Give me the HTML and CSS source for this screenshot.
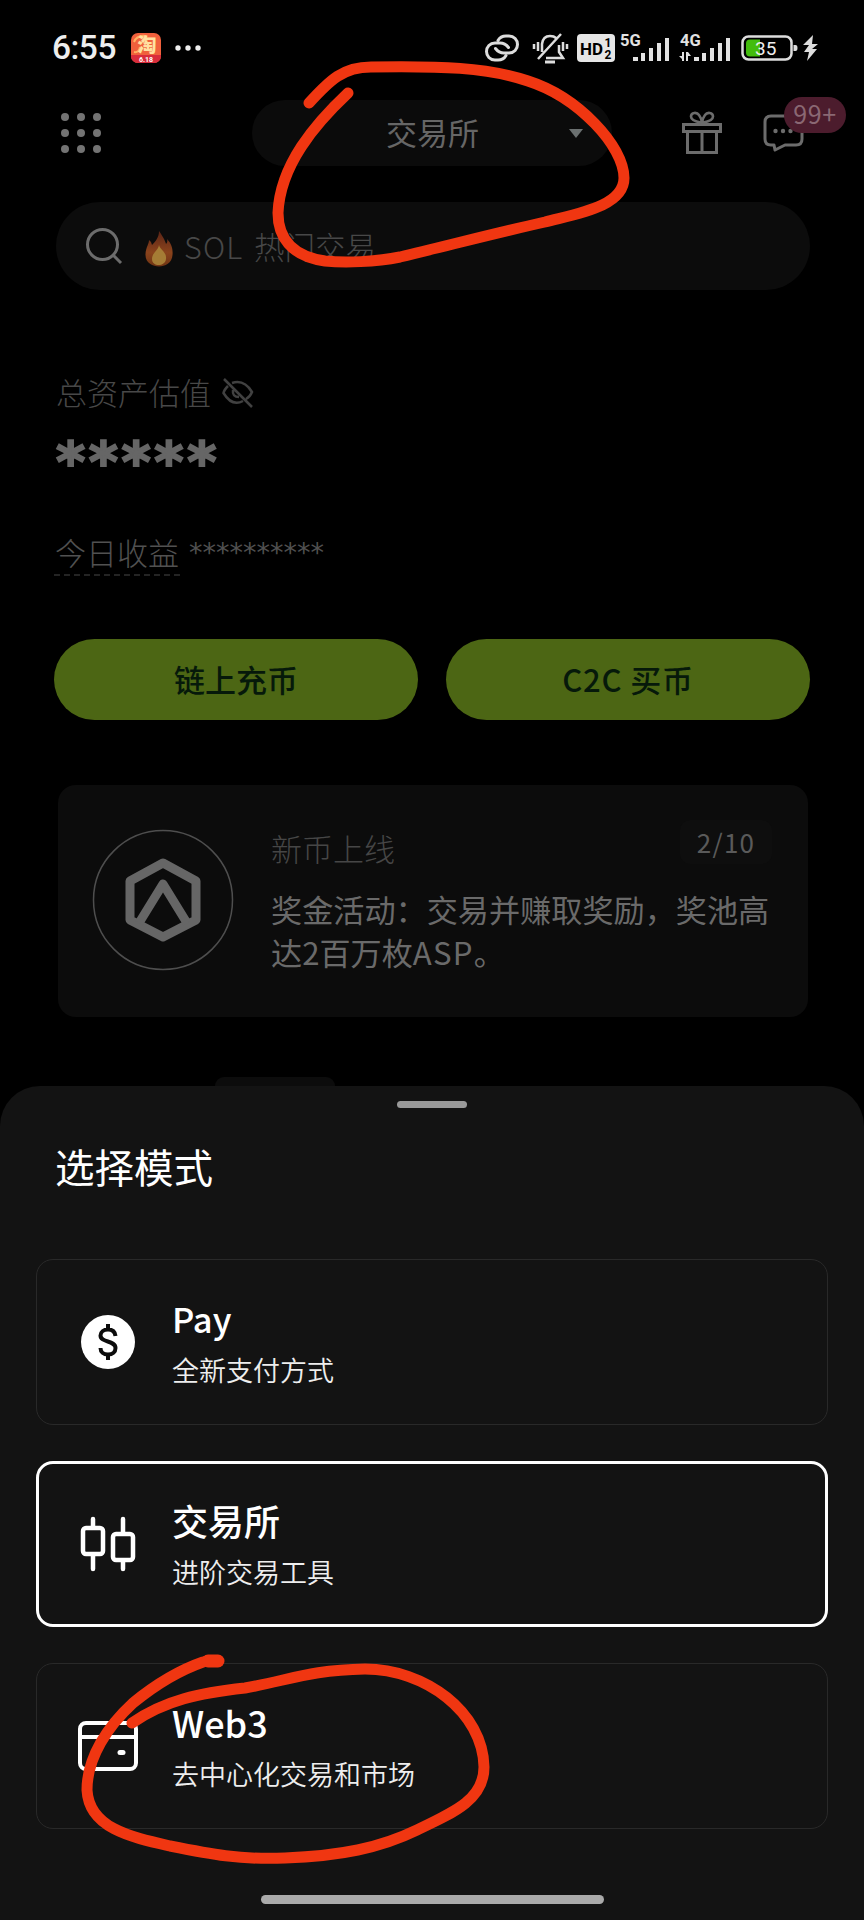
FILE: index.html
```html
<!DOCTYPE html>
<html lang="zh-CN">
<head>
<meta charset="utf-8">
<title>选择模式</title>
<link rel="stylesheet" href="styles.css">
</head>
<body>
<div class="screen">
  <div class="status">
    <span class="time">6:55</span>
    <svg class="app" width="30" height="30" viewBox="0 0 30 30"><defs><clipPath id="r"><rect width="30" height="30" rx="7"/></clipPath></defs><g clip-path="url(#r)"><rect width="30" height="30" fill="#f0603c"/><rect y="22" width="30" height="8" fill="#d92c3c"/><path d="M3 9Q6 2 14 3M3 19Q8 20 9 14" fill="none" stroke="#ffb060" stroke-width="2"/></g><text x="16" y="18.500" font-size="19" font-weight="900" text-anchor="middle" fill="#ffe0a0">淘</text><text x="15" y="28.500" font-family="Roboto" font-size="7" font-weight="700" text-anchor="middle" fill="#fff">6.18</text></svg>
    <svg class="more" width="28" height="8" viewBox="0 0 28 8" fill="#eee"><circle cx="4" cy="4" r="2.700"/><circle cx="14" cy="4" r="2.700"/><circle cx="24" cy="4" r="2.700"/></svg>
    <div class="indicators">
      <svg class="link" width="34" height="28" viewBox="0 0 34 28" fill="none" stroke="#ddd" stroke-width="3" stroke-linecap="round"><path d="M13 6.500Q15.500 2 21 2H24C29 2 32.500 6 32.500 10.500S29 19 24 19H19C14.500 19 12 16.500 10.500 14.500"/><path d="M21 21.500Q18.500 26 13 26H10C5 26 1.500 22 1.500 17.500S5 9 10 9H15C19.500 9 22 11.500 23.500 13.500"/></svg>
      <svg class="bell" width="36" height="31" viewBox="0 0 36 31" fill="none" stroke="#ddd" stroke-width="2.500"><path d="M10 19V11Q11 3 18 3Q22 3 24 5M27 12V19L31 25H14M6 26L29 1M6 9V18M2 11V16M31 9V18M35 11V16"/><path d="M13 29H23" stroke-width="3"/></svg>
      <svg class="hd" width="38" height="28" viewBox="0 0 38 28"><rect width="38" height="28" rx="4" fill="#e6e6e6"/><text x="3" y="20.500" font-size="17" font-weight="700" textLength="23" lengthAdjust="spacingAndGlyphs">HD</text><text x="27.500" y="12.500" font-size="12" font-weight="700">1</text><text x="27.500" y="25" font-size="12" font-weight="700">2</text></svg>
      <svg class="sig5" width="50" height="30" viewBox="0 0 50 30" fill="#e2e2e2"><text x="0" y="13" font-size="16.500" font-weight="700">5G</text><path d="M13 24h5v4h-5zM21 20h4v8h-4zM29 15h4v13h-4zM37 10h4v18h-4zM45 5h4v23h-4z"/></svg>
      <svg class="sig4" width="52" height="30" viewBox="0 0 52 30" fill="#e2e2e2"><text x="1" y="13" font-size="16.500" font-weight="700">4G</text><path d="M0 23h5v5zM3 19h2v9H3zM7 19h2v9H7zM9 19l3 4H9zM15 24h5v4h-5zM23 20h4v8h-4zM31 15h4v13h-4zM39 10h4v18h-4zM47 5h4v23h-4z"/></svg>
      <svg class="battery" width="57" height="26" viewBox="0 0 57 26"><rect x="1.500" y="1.500" width="49" height="23" rx="6" fill="none" stroke="#ddd" stroke-width="2.500"/><path d="M9 4.500H19V21.500H9Q5 21.500 5 17.500V8.500Q5 4.500 9 4.500Z" fill="#43bd0d"/><path d="M52.500 10h2q2 0 2 3t-2 3h-2z" fill="#ddd"/><text x="14" y="19.500" font-size="19" fill="#eee">35</text></svg>
      <svg class="bolt" width="15" height="26" viewBox="0 0 15 26"><path d="M10 0L0 10H6L1 17H6L4 26L14 14H9L15 9H9Z" fill="#ddd"/></svg>
    </div>
  </div>

  <div class="header">
    <svg class="grid" width="40" height="40" viewBox="0 0 40 40" fill="#737373"><circle cx="4" cy="4" r="4"/><circle cx="20" cy="4" r="4"/><circle cx="36" cy="4" r="4"/><circle cx="4" cy="20" r="4"/><circle cx="20" cy="20" r="4"/><circle cx="36" cy="20" r="4"/><circle cx="4" cy="36" r="4"/><circle cx="20" cy="36" r="4"/><circle cx="36" cy="36" r="4"/></svg>
    <div class="pill"><span>交易所</span><svg width="14" height="9" viewBox="0 0 14 9"><path d="M0 0H14L7 9Z" fill="#6b7070"/></svg></div>
    <svg class="gift" width="40" height="44" viewBox="0 0 40 44" fill="none" stroke="#6c6c6c" stroke-width="3"><rect x="1.500" y="13.500" width="37" height="7"/><path d="M5.500 21V41.500H34.500V21M20 21V41"/><path d="M20 12C16 11 9 10 9 5.500S15 1 17 4Q20 8 20 12C24 11 31 10 31 5.500S25 1 23 4Q20 8 20 12" stroke-width="2.600"/></svg>
    <div class="chat">
      <svg width="41" height="38" viewBox="0 0 41 38"><path d="M8 2H33Q39 2 39 8V25Q39 31 33 31H22L12 36L11 31H8Q2 31 2 25V8Q2 2 8 2Z" fill="none" stroke="#6c6c6c" stroke-width="3" stroke-linejoin="round"/><g fill="#6c6c6c"><circle cx="12.500" cy="17" r="2.200"/><circle cx="20" cy="17" r="2.200"/><circle cx="27.500" cy="17" r="2.200"/></g></svg>
      <span class="badge">99+</span>
    </div>
  </div>

  <div class="search">
    <svg width="36" height="37" viewBox="0 0 36 37" fill="none" stroke="#6c6c6c" stroke-width="3"><circle cx="16.500" cy="16.500" r="15"/><path d="M27 27L35 35"/></svg>
    <svg class="flame" width="28" height="36" viewBox="0 0 28 36"><defs><linearGradient id="f" x1="0" y1="0" x2="0" y2="1"><stop offset="0" stop-color="#5a2416"/><stop offset=".6" stop-color="#8a431c"/><stop offset="1" stop-color="#6f3413"/></linearGradient></defs><path d="M14 0C18 6 20 9 21 13Q23 11 22 8C27 13 28 19 27.500 24C27 32 20 35.500 14 35.500S0 32 .5 23C1 16 4 13 4 9Q7 11 7 14C11 10 14 6 14 0Z" fill="url(#f)"/><path d="M14 14C15 19 22 21 21 28C20 36 7 36 7 28C7 22 13 20 14 14Z" fill="#a57c35"/></svg>
    <span class="sol">SOL</span><span>热门交易</span>
  </div>

  <div class="assets">
    <div class="label"><span>总资产估值</span><svg width="32" height="30" viewBox="0 0 32 30" fill="none" stroke="#414141" stroke-width="2.500"><path d="M2 1L30 29M10 5Q22 1 30 14Q28 19 24 21M6 8Q2 12 1.500 15Q10 29 21 23M11 12Q10 19 17 19"/></svg></div>
    <div class="total">*****</div>
    <div class="today"><span class="dashed">今日收益</span><span class="stars">**********</span></div>
  </div>

  <div class="actions"><div class="btn">链上充币</div><div class="btn c2c">C2C 买币</div></div>

  <div class="promo">
    <svg width="142" height="142" viewBox="0 0 142 142" fill="none"><circle cx="71" cy="71" r="69.500" stroke="#4e4e4e" stroke-width="1.500"/><g stroke="#666" stroke-width="9" stroke-linejoin="round"><path d="M71 34L104 52V91L71 108L38 91V52Z"/><path d="M47 94L71 55L95 94"/></g></svg>
    <div class="promo-body">
      <div class="promo-head"><span>新币上线</span><span class="count">2/10</span></div>
      <p>奖金活动：交易并赚取奖励，奖池高达2百万枚<span class="latin">ASP</span>。</p>
    </div>
  </div>

  <div class="peek"></div>
  <div class="sheet">
    <div class="handle"></div>
    <h1>选择模式</h1>
    <div class="modes">
      <div class="mode">
        <svg width="60" height="60" viewBox="0 0 60 60"><circle cx="30" cy="30" r="27" fill="#fff"/><path d="M37.500 24C37 19.500 34 17.500 30 17.500C25.500 17.500 22.500 20 22.500 23.500C22.500 31 37.500 28 37.500 36C37.500 40 34.500 42.500 30 42.500C25.500 42.500 22.500 40 22.500 36M30 12V18M30 42V48" fill="none" stroke="#0c0c0c" stroke-width="4"/></svg>
        <div><b class="pay">Pay</b><p>全新支付方式</p></div>
      </div>
      <div class="mode selected">
        <svg width="60" height="60" viewBox="0 0 60 60" fill="none" stroke="#fff" stroke-width="4.500" stroke-linecap="round"><rect x="5" y="14" width="20" height="26" rx="3"/><rect x="35" y="20" width="20" height="26" rx="3"/><path d="M15 5V13M15 41V55M45 5V19M45 47V55"/></svg>
        <div><b>交易所</b><p>进阶交易工具</p></div>
      </div>
      <div class="mode">
        <svg width="60" height="60" viewBox="0 0 60 60" fill="none" stroke="#fff" stroke-width="4"><rect x="2" y="7" width="56" height="46" rx="6"/><path d="M2 21H58"/><path d="M42 36.500H45" stroke-width="5" stroke-linecap="round"/></svg>
        <div><b>Web3</b><p>去中心化交易和市场</p></div>
      </div>
    </div>
    <div class="home"></div>
  </div>

  <svg class="marker" width="864" height="1920" viewBox="0 0 864 1920">
    <path d="M309 103C330 80 343 67 371 67C440 66 487 67 528 81C578 97 624 146 624 178C624 207 575 214 545 222C500 232 450 245 400 257C375 262 345 263 325 261C290 256 278 236 278 213C280 165 315 124 348 93"/>
    <path d="M218 1661C212 1661 208 1660 203 1662C180 1670 155 1685 133 1703C108 1726 87 1757 87 1790C89 1828 130 1837 170 1846C210 1854 240 1860 285 1858C340 1856 380 1848 417 1830C455 1812 484 1799 484 1767C483 1712 425 1669 365 1669C310 1670 290 1680 245 1688C200 1693 165 1700 132 1723"/>
    <path d="M208 1661H218" stroke-width="13"/>
  </svg>
</div>
</body>
</html>
```
FILE: styles.css
```css
* { box-sizing: border-box; }
body { margin: 0; background: #000; font-family: "Noto Sans CJK SC", sans-serif; }
svg { display: block; flex: none; overflow: visible; }
p, h1 { margin: 0; }
.screen { position: relative; width: 864px; height: 1920px; overflow: hidden; display: flex; flex-direction: column; }

.status { height: 96px; padding: 0 46px 0 52px; display: flex; align-items: center; }
.time { width: 79px; font: 500 33.500px/96px Roboto, sans-serif; letter-spacing: -0.5px; color: #eee; }
.more { margin-left: 13px; }
.indicators { margin-left: auto; display: flex; align-items: center; font-family: Roboto, sans-serif; }
.bell { margin-left: 13px; }
.hd { margin-left: 9px; }
.sig5 { margin-left: 5px; }
.sig4 { margin-left: 9px; }
.battery { margin-left: 10px; }
.bolt { margin-left: 5px; }

.header { height: 74px; padding-left: 61px; display: flex; align-items: center; }
.pill { width: 360px; height: 66px; margin-left: 151px; padding: 0 29px 0 134px; border-radius: 33px; background: #0b0b0b; display: flex; align-items: center; justify-content: space-between; font-size: 31px; line-height: 46px; color: #666; }
.pill span { padding-bottom: 3px; }
.gift { margin-left: 70px; }
.chat { position: relative; margin-left: 41px; }
.badge { position: absolute; left: 21px; top: -17px; width: 62px; height: 36px; border-radius: 18px; background: #4c1c2d; color: #8a6873; font-size: 25px; letter-spacing: 0.7px; line-height: 32px; text-align: center; }

.search { height: 88px; margin: 32px 54px 0 56px; padding-left: 30px; border-radius: 44px; background: #0c0c0c; display: flex; align-items: center; font-size: 30.500px; font-weight: 300; color: #484848; }
.sol { width: 70px; letter-spacing: 1.200px; }
.flame { margin: 6px 11px 0 23px; }

.assets { padding-left: 56px; margin-top: 78px; }
.label { height: 50px; display: flex; align-items: center; gap: 11px; font-size: 31px; font-weight: 300; line-height: 50px; color: #484848; }
.label span { padding-bottom: 3px; line-height: 47px; }
.total { height: 88px; font: 700 56px/88px "DejaVu Sans", sans-serif; letter-spacing: 3.500px; color: #666; -webkit-text-stroke: 2px #666; }
.today { margin-top: 28px; height: 42px; display: flex; }
.dashed { margin-left: -2px; padding-left: 1px; width: 126px; height: 42px; border-bottom: 2px dashed #242424; font-size: 31px; font-weight: 300; line-height: 36px; color: #515151; white-space: nowrap; }
.stars { margin-left: 9px; font: 27px/38px "DejaVu Sans", sans-serif; color: #505050; }

.actions { margin: 63px 54px 0; display: grid; grid-template-columns: 1fr 1fr; gap: 28px; }
.btn { height: 81px; border-radius: 41px; background: #4c6614; color: #06190a; font-size: 31px; font-weight: 500; line-height: 80px; text-align: center; }
.c2c { letter-spacing: 0.8px; }
.latin { letter-spacing: 1.200px; }

.promo { height: 232px; margin: 65px 56px 0 58px; padding: 44px 34px 0; border-radius: 18px; background: #0c0c0c; display: flex; gap: 37px; }
.promo-body { flex: 1; margin-right: -10px; }
.promo-head { height: 60px; margin-top: -11px; display: flex; justify-content: space-between; font-size: 31px; font-weight: 300; line-height: 60px; color: #464646; }
.count { width: 92px; height: 44px; margin: 2px 12px 0 0; border-radius: 10px; background: #0e0e0e; font-size: 26px; font-weight: 400; letter-spacing: 1.300px; line-height: 43px; text-align: center; color: #5a5a5a; }
.promo p { margin-top: 9px; font-size: 31.150px; line-height: 43px; color: #6a6a6a; }

.peek { width: 120px; height: 9px; margin: 60px 0 0 215px; border-radius: 16px 16px 0 0; background: #0c0c0c; }
.sheet { height: 834px; border-radius: 40px 40px 0 0; background: #131313; color: #fff; display: flex; flex-direction: column; }
.handle { width: 70px; height: 7px; margin: 15px auto 0; border-radius: 4px; background: #999; }
.sheet h1 { margin: 29px 0 2px 55px; height: 58px; font-size: 39.500px; font-weight: 400; line-height: 58px; }
.modes { margin: 62px 36px 0; display: grid; gap: 36px; }
.mode { height: 166px; padding: 0 0 0 41px; border: 1px solid #292929; border-radius: 17px; display: flex; align-items: center; gap: 34px; }
.mode b { display: block; height: 52px; font-size: 36px; font-weight: 500; line-height: 54px; }
.mode .pay { font-size: 34.500px; }
.mode p { height: 50px; font-size: 27px; line-height: 54px; font-weight: 350; color: #eee; }
.selected { border: 3px solid #fff; padding-left: 39px; }
.home { width: 343px; height: 9px; margin: 66px auto 0; border-radius: 5px; background: #aaa; }

.marker { position: absolute; inset: 0; fill: none; stroke: #f03611; stroke-width: 11; stroke-linecap: round; stroke-linejoin: round; }
```
